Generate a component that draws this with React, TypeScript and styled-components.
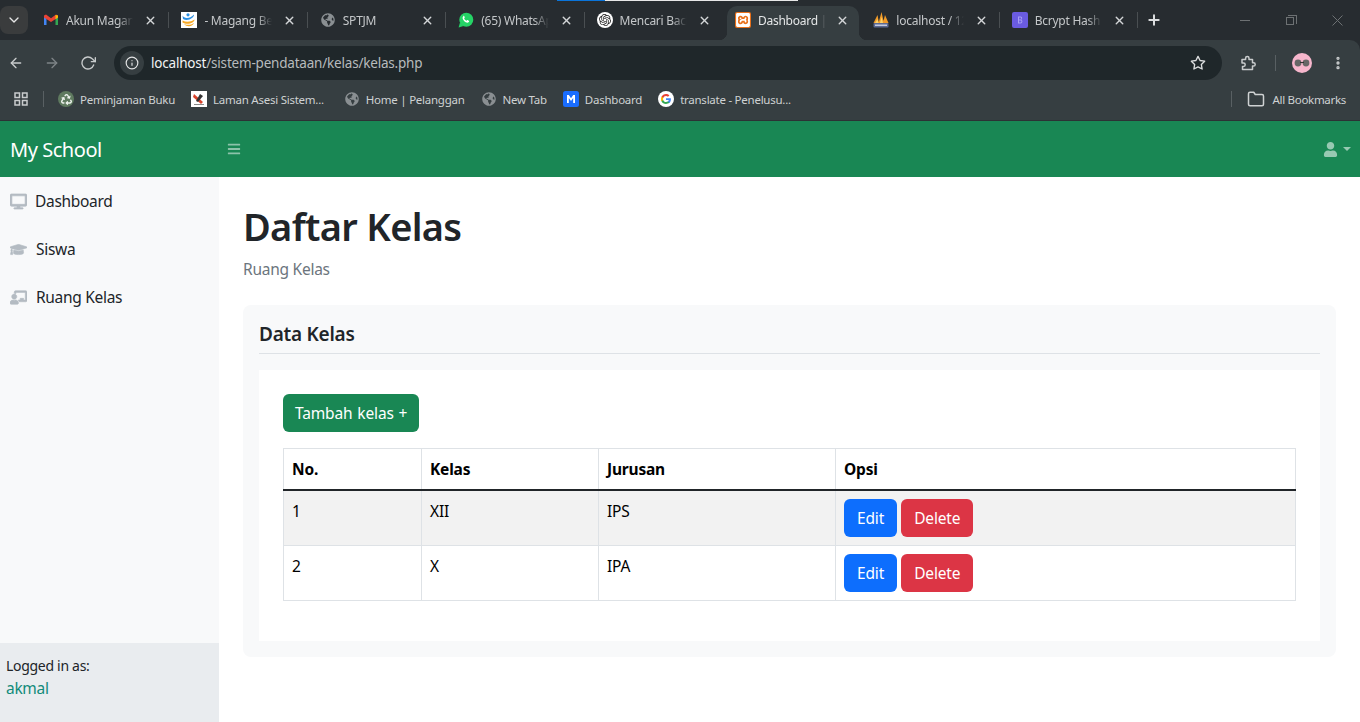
import React from "react";
import styled, { createGlobalStyle } from "styled-components";
import { FaBars, FaChalkboardTeacher, FaDesktop, FaGlobeAmericas, FaGraduationCap, FaRecycle, FaUser } from "react-icons/fa";
import { SiOpenai, SiXampp } from "react-icons/si";
import { FiArrowLeft, FiArrowRight, FiFolder, FiInfo, FiMoreVertical, FiPlus, FiRotateCw, FiStar, FiX } from "react-icons/fi";
import { LuChevronDown } from "react-icons/lu";

const Global = createGlobalStyle`
  html, body { margin: 0; padding: 0; height: 100%; overflow: hidden; background: #fff; }
  body { font-family: "Noto Sans", "Liberation Sans", sans-serif; color: #212529; }
  #root { height: 722px; }
  * { box-sizing: border-box; }
`;

const Shell = styled.div`
  display: flex;
  flex-direction: column;
  width: 1360px;
  height: 722px;
  background: #272c30;
`;

/* ---------- browser chrome ---------- */
const TabStrip = styled.div`
  position: relative;
  display: flex;
  align-items: flex-start;
  flex: 0 0 40px;
  background: #272c30;
  color: #c9ccce;
`;
const LoadBar = styled.div`
  position: absolute;
  top: 0;
  left: 557px;
  width: 241px;
  height: 1px;
  background: linear-gradient(90deg, #0a74da 0 48px, #e8e8e8 48px);
`;
const TabMenu = styled.div`
  display: flex;
  flex: 0 0 28px;
  align-items: center;
  justify-content: center;
  height: 28px;
  margin: 6px 3px 0 0;
  border-radius: 8px;
  background: #3a3c3d;
  color: #e6e6e6;
  font-size: 16px;
`;
const TabItem = styled.div`
  position: relative;
  display: flex;
  align-items: center;
  flex: 0 0 138.4px;
  min-width: 0;
  height: 40px;
  padding: 0 12px;
  font-size: 12px;
  letter-spacing: -0.25px;
  color: #c4c7c9;
`;
const ActiveTab = styled(TabItem)`
  flex-basis: 132.4px;
  height: 34px;
  margin: 6px 2px 0 4px;
  padding: 0 10px 6px 8px;
  border-radius: 10px 10px 0 0;
  background: #363e41;
  color: #e4e6e7;
  &::before,
  &::after {
    content: "";
    position: absolute;
    bottom: 0;
    width: 8px;
    height: 8px;
  }
  &::before {
    left: -8px;
    background: radial-gradient(circle at 0 0, transparent 8px, #363e41 8.5px);
  }
  &::after {
    right: -8px;
    background: radial-gradient(circle at 100% 0, transparent 8px, #363e41 8.5px);
  }
`;
const TabSep = styled.span`
  position: absolute;
  right: 0;
  top: 12px;
  width: 1px;
  height: 16px;
  background: #4a4f52;
`;
const IconSlot = styled.span`
  display: inline-flex;
  align-items: center;
  justify-content: center;
  flex: 0 0 16px;
  width: 16px;
  height: 16px;
`;
const Badge = styled.span<{ $bg: string; $round?: boolean }>`
  display: inline-flex;
  align-items: center;
  justify-content: center;
  width: 16px;
  height: 16px;
  border-radius: ${(p) => (p.$round ? "50%" : "2px")};
  background: ${(p) => p.$bg};
`;
const TabTitle = styled.span<{ $fadeFrom: number }>`
  flex: 1;
  min-width: 0;
  margin: 0 11px 0 7px;
  overflow: hidden;
  white-space: nowrap;
  -webkit-mask-image: linear-gradient(90deg, #000 ${(p) => p.$fadeFrom}%, transparent 100%);
  mask-image: linear-gradient(90deg, #000 ${(p) => p.$fadeFrom}%, transparent 100%);
`;
const CloseX = styled(FiX)`
  flex: 0 0 13px;
  width: 13px;
  height: 13px;
  stroke-width: 2.6;
  color: #d4d6d8;
`;
const NewTab = styled(FiPlus)`
  flex: 0 0 16px;
  width: 16px;
  height: 16px;
  margin: 12px 0 0 8px;
  stroke-width: 3;
  color: #dcdedf;
`;
const WindowControls = styled.div`
  display: flex;
  align-items: center;
  gap: 36px;
  height: 40px;
  margin-left: auto;
  padding-right: 17px;
`;
const WinMin = styled.span`
  width: 10px;
  height: 1px;
  background: #6d7173;
`;
const WinMax = styled.span`
  position: relative;
  width: 8px;
  height: 8px;
  margin: 2px 2px 0 0;
  border: 1px solid #6d7173;
  &::after {
    content: "";
    position: absolute;
    left: 1px;
    top: -3px;
    width: 8px;
    height: 8px;
    border-top: 1px solid #6d7173;
    border-right: 1px solid #6d7173;
  }
`;
const Toolbar = styled.div`
  display: flex;
  align-items: center;
  flex: 0 0 46px;
  padding: 0 0 0 8px;
  border-top-right-radius: 10px;
  background: #363e41;
  color: #c9cccd;
`;
const NavIcon = styled.span<{ $dim?: boolean }>`
  display: inline-flex;
  width: 16px;
  height: 16px;
  margin-right: 20px;
  font-size: 16px;
  color: ${(p) => (p.$dim ? "#7e8487" : "#c9cccd")};
`;
const Omnibox = styled.div`
  display: flex;
  align-items: center;
  width: 1108px;
  height: 34px;
  margin-left: -2px;
  padding: 0 16px 0 6px;
  border-radius: 17px;
  background: #1f272a;
  font-size: 13.5px;
  letter-spacing: -0.2px;
`;
const SiteInfo = styled.span`
  display: inline-flex;
  align-items: center;
  justify-content: center;
  width: 24px;
  height: 24px;
  margin-right: 7px;
  border-radius: 50%;
  background: #363e41;
  color: #e3e4e5;
  font-size: 14px;
`;
const UrlHost = styled.span`
  color: #f1f3f4;
`;
const UrlPath = styled.span`
  flex: 1;
  color: #b7bbbd;
`;
const ToolIcons = styled.div`
  display: flex;
  align-items: center;
  margin-left: 17px;
  color: #c9cccd;
`;
const ToolSep = styled.span`
  width: 1px;
  height: 16px;
  margin: 0 16px 0 18px;
  background: #596063;
`;
const Avatar = styled.span`
  display: inline-flex;
  align-items: center;
  justify-content: center;
  width: 20px;
  height: 20px;
  margin-right: 18px;
  border-radius: 50%;
  background: #f6b6cc;
`;
const Kebab = styled(FiMoreVertical)`
  width: 16px;
  height: 16px;
  stroke-width: 3;
`;
const BookmarkBar = styled.div`
  display: flex;
  align-items: center;
  flex: 0 0 35px;
  padding: 0 14px 8px 13px;
  background: #363e41;
  border-bottom: 1px solid #2c3235;
  font-size: 11.5px;
  letter-spacing: -0.25px;
  color: #cfd2d3;
`;
const BarSep = styled.span`
  width: 1px;
  height: 16px;
  margin: 0 14px;
  background: #596063;
`;
const EndSep = styled(BarSep)`
  margin: 0 15px 0 0;
`;
const Bookmark = styled.span<{ $after?: number }>`
  display: inline-flex;
  align-items: center;
  gap: 6px;
  margin-right: ${(p) => p.$after ?? 16}px;
  white-space: nowrap;
`;
const BookmarksEnd = styled.div`
  display: flex;
  align-items: center;
  margin-left: auto;
`;
const AllBookmarks = styled(Bookmark)`
  margin: 0;
  gap: 7px;
  letter-spacing: -0.3px;
`;

/* ---------- page ---------- */
const TopNav = styled.nav`
  display: flex;
  align-items: center;
  flex: 0 0 56px;
  background: #198754;
  color: #fff;
`;
const Brand = styled.div`
  width: 219px;
  padding-left: 10px;
  font-size: 20px;
  letter-spacing: -0.45px;
`;
const Burger = styled(FaBars)`
  width: 14px;
  height: 14px;
  margin-left: 8px;
  color: rgba(255, 255, 255, 0.5);
`;
const UserMenu = styled.div`
  display: flex;
  align-items: center;
  gap: 5px;
  margin-left: auto;
  padding-right: 9px;
  color: rgba(255, 255, 255, 0.55);
`;
const Caret = styled.span`
  border-top: 4px solid rgba(255, 255, 255, 0.55);
  border-left: 4px solid transparent;
  border-right: 4px solid transparent;
`;
const Body = styled.div`
  display: flex;
  flex: 1;
  min-height: 0;
  background: #fff;
`;
const Sidebar = styled.aside`
  display: flex;
  flex-direction: column;
  flex: 0 0 219px;
  background: #f8f9fa;
`;
const SideMenu = styled.div`
  flex: 1;
`;
const SideLink = styled.div`
  display: flex;
  align-items: center;
  height: 48px;
  padding-left: 10px;
  font-size: 15.5px;
  letter-spacing: -0.3px;
  color: #212529;
`;
const SideIcon = styled.span<{ $gap: number }>`
  display: inline-flex;
  width: 17px;
  margin-right: ${(p) => p.$gap}px;
  font-size: 17px;
  color: #b4bbc2;
  svg {
    stroke: currentColor;
    stroke-width: 22;
  }
`;
const SideFooter = styled.div`
  flex: 0 0 79px;
  padding: 13px 6px;
  background: #e9ecef;
  font-size: 14px;
  letter-spacing: -0.3px;
  line-height: 20px;
`;
const UserName = styled.div`
  margin-top: 2px;
  font-size: 15.5px;
  color: #128a7a;
`;
const Main = styled.main`
  flex: 1;
  min-width: 0;
  padding: 23px 24px 0;
`;
const Title = styled.h1`
  margin: 0;
  font-size: 38px;
  line-height: 52px;
  font-weight: 600;
  letter-spacing: -0.7px;
`;
const Subtitle = styled.p`
  margin: 7px 0 26px;
  font-size: 15.5px;
  line-height: 20px;
  letter-spacing: -0.25px;
  color: #6c757d;
`;
const Card = styled.section`
  padding: 16px;
  border-radius: 8px;
  background: #f8f9fa;
`;
const CardHead = styled.h2`
  margin: 0 0 16px;
  padding-bottom: 6px;
  border-bottom: 1px solid #dee2e6;
  font-size: 19px;
  line-height: 26px;
  font-weight: 600;
  letter-spacing: -0.25px;
`;
const Panel = styled.div`
  padding: 24px 24px 40px;
  background: #fff;
`;
const Button = styled.button<{ $bg: string }>`
  height: 38px;
  padding: 0 13px;
  border: 0;
  border-radius: 6px;
  background: ${(p) => p.$bg};
  color: #fff;
  font: inherit;
  font-size: 15.5px;
  letter-spacing: -0.15px;
  white-space: nowrap;
`;
const AddButton = styled(Button)`
  display: block;
  width: 136px;
  margin-bottom: 16px;
  padding: 0 12px;
  word-spacing: 1px;
`;
const Table = styled.table`
  width: 1013px;
  table-layout: fixed;
  border-collapse: collapse;
  font-size: 15.5px;
  letter-spacing: -0.2px;
  color: #000;
`;
const HeadCell = styled.th<{ $w?: number }>`
  width: ${(p) => (p.$w ? `${p.$w}px` : "auto")};
  height: 41px;
  padding: 0 8px;
  border: 1px solid #dee2e6;
  border-bottom: 2px solid #212529;
  text-align: left;
  font-weight: 700;
`;
const Row = styled.tr<{ $striped?: boolean }>`
  background: ${(p) => (p.$striped ? "#f2f2f2" : "#fff")};
`;
const Cell = styled.td`
  height: 55px;
  padding: 8px;
  border: 1px solid #dee2e6;
  vertical-align: top;
  line-height: 24px;
`;
const CellActions = styled.div`
  display: flex;
  gap: 4px;
`;

const Favicon = ({ kind }: { kind: string }) => {
  switch (kind) {
    case "gmail":
      return (
        <svg width="16" height="16" viewBox="0 0 16 16">
          <path d="M1 4v9h2.500V6.500z" fill="#4285f4" />
          <path d="M15 4v9h-2.500V6.500z" fill="#34a853" />
          <path d="M1 3.600 3 2.400 8 6.300l5-3.900 2 1.200v1.900L8 10 1 5.500z" fill="#ea4335" />
          <path d="M12.500 3 15 3.600v2l-2.500 1.700z" fill="#fbbc04" />
        </svg>
      );
    case "magang":
      return (
        <svg width="16" height="16" viewBox="0 0 16 16">
          <rect width="16" height="16" fill="#fff" />
          <circle cx="7" cy="2.800" r="1.600" fill="#2d8fe0" />
          <path d="M1.500 3.500C3 7 9 7 13 2.500c.5 3-6 7.500-11 4.500z" fill="#2d8fe0" />
          <path d="M1.500 8.500c4 2 8 1.500 12-1 .5 3-7 6-12 3z" fill="#f7a823" />
          <path d="M3 12c3.500 1.500 7 1 10-1-1 3.500-7 4.500-10 1z" fill="#f7a823" />
        </svg>
      );
    case "globe":
      return <FaGlobeAmericas size={14} color="#8a8f92" />;
    case "whatsapp":
      return (
        <svg width="16" height="16" viewBox="0 0 16 16">
          <circle cx="8.300" cy="7.700" r="7" fill="#25d366" />
          <path d="M.6 15.600 2 10.500l3.500 3.500z" fill="#25d366" />
          <path d="M5.300 4.300c-1.200 1-.9 2.900.8 4.700 1.800 1.800 3.600 2.200 4.700 1 .5-.5.4-1-.1-1.300l-1.100-.6c-.3-.1-.6 0-.8.3-.3.400-.6.400-1.200-.1-.7-.6-1.200-1.100-1.400-1.600-.1-.3 0-.5.3-.7.3-.3.3-.6.2-.9l-.6-1c-.2-.4-.5-.3-.8.200z" fill="#fff" />
        </svg>
      );
    case "openai":
      return (
        <Badge $bg="#fff" $round>
          <SiOpenai size={12} color="#222" />
        </Badge>
      );
    case "xampp":
      return (
        <Badge $bg="#e8701a">
          <SiXampp size={14} color="#fff" />
        </Badge>
      );
    case "pma":
      return (
        <svg width="16" height="16" viewBox="0 0 16 16">
          <path d="M.5 11 4.500 3 6 11zM5.500 11 8.500 0 11 11zM10 11l2-8 3.500 8z" fill="#f29b28" />
          <path d="M7 11 8.500 5 10 11zM2 11l2.500-4L5.500 11z" fill="#fbd36a" />
          <rect x="0.500" y="11" width="15" height="4.500" rx="1" fill="#5d6a92" />
          <path d="M2 12.500h12v1.500H2z" fill="#c4cae0" />
        </svg>
      );
    case "bcrypt":
      return (
        <svg width="16" height="16" viewBox="0 0 16 16">
          <rect width="16" height="16" rx="2" fill="#6a5be0" />
          <path d="M6 4.500h2.600c2 0 2 3 .4 3.300 2 .3 1.800 3.700-.4 3.700H6zM7 5.400v2h1.500c1 0 1-2 0-2zM7 8.400v2.200h1.500c1.200 0 1.200-2.200 0-2.200z" fill="#a79ff2" />
        </svg>
      );
    case "recycle":
      return (
        <Badge $bg="#5f7a5f" $round>
          <FaRecycle size={11} color="#eef3ee" />
        </Badge>
      );
    case "asesi":
      return (
        <svg width="16" height="16" viewBox="0 0 16 16">
          <rect width="16" height="16" fill="#fff" />
          <path d="M3 3l9 8-2 2-8-7z" fill="#d8442c" />
          <path d="M9 3l3 2-5 6-2-1z" fill="#333" />
          <rect x="3" y="13" width="10" height="1" fill="#888" />
        </svg>
      );
    case "mblue":
      return (
        <svg width="16" height="16" viewBox="0 0 16 16">
          <rect width="16" height="16" rx="2.500" fill="#1a6dff" />
          <path d="M4 12V4h1.800L8 7.200 10.200 4H12v8h-1.800V7L8 10 5.800 7v5z" fill="#fff" />
        </svg>
      );
    case "google":
      return (
        <svg width="16" height="16" viewBox="0 0 16 16">
          <circle cx="8" cy="8" r="8" fill="#fff" />
          <path d="M12.900 8.200c0-.4 0-.7-.1-1H8v1.900h2.800c-.1.600-.5 1.200-1 1.500v1.300h1.600c1-.9 1.500-2.200 1.500-3.700z" fill="#4285f4" />
          <path d="M8 13c1.400 0 2.500-.5 3.400-1.200l-1.600-1.300c-.5.300-1 .5-1.800.5-1.300 0-2.400-.9-2.800-2.100H3.500v1.300C4.300 11.900 6 13 8 13z" fill="#34a853" />
          <path d="M5.200 8.900C5 8.300 5 7.700 5.200 7.100V5.800H3.500c-.7 1.400-.7 3 0 4.400z" fill="#fbbc04" />
          <path d="M8 5c.7 0 1.400.3 1.900.8l1.500-1.400C10.500 3.500 9.300 3 8 3 6 3 4.300 4.100 3.500 5.800l1.700 1.300C5.600 5.900 6.700 5 8 5z" fill="#ea4335" />
        </svg>
      );
    default:
      return null;
  }
};

const tabs = [
  { icon: "gmail", title: "Akun Magang" },
  { icon: "magang", title: "- Magang Bersama" },
  { icon: "globe", title: "SPTJM" },
  { icon: "whatsapp", title: "(65) WhatsApp" },
  { icon: "openai", title: "Mencari Backup" },
  { icon: "xampp", title: "Dashboard | My School", active: true },
  { icon: "pma", title: "localhost / 127.0.0.1" },
  { icon: "bcrypt", title: "Bcrypt Hash Generator" },
];

const bookmarks = [
  { icon: "recycle", label: "Peminjaman Buku" },
  { icon: "asesi", label: "Laman Asesi Sistem...", after: 20 },
  { icon: "globe", label: "Home | Pelanggan" },
  { icon: "globe", label: "New Tab" },
  { icon: "mblue", label: "Dashboard" },
  { icon: "google", label: "translate - Penelusu..." },
];

const GridIcon = () => (
  <svg width="16" height="16" viewBox="0 0 16 16" fill="none" stroke="#c9cccd" strokeWidth="1.500">
    <rect x="2" y="2" width="4.500" height="4.500" />
    <rect x="9.500" y="2" width="4.500" height="4.500" />
    <rect x="2" y="9.500" width="4.500" height="4.500" />
    <rect x="9.500" y="9.500" width="4.500" height="4.500" />
  </svg>
);

const ExtensionIcon = () => (
  <svg width="18" height="18" viewBox="0 0 18 18" fill="none" stroke="#c9cccd" strokeWidth="1.500" strokeLinejoin="round">
    <path d="M3 5.500h3.600V4.200a1.700 1.700 0 0 1 3.400 0v1.300h3.500v3.200h1a1.700 1.700 0 0 1 0 3.400h-1V15.500H3.500v-3h1a1.700 1.700 0 0 0 0-3.400h-1.500z" />
  </svg>
);

const WinClose = () => (
  <svg width="11" height="11" viewBox="0 0 11 11" stroke="#6d7173" strokeWidth="1">
    <path d="M.5.500l10 10M10.500.500l-10 10" />
  </svg>
);

const Glasses = () => (
  <svg width="16" height="8" viewBox="0 0 16 8">
    <circle cx="4" cy="4" r="3.400" fill="#666" />
    <circle cx="12" cy="4" r="3.400" fill="#666" />
    <rect x="6" y="3" width="4" height="1" fill="#333" />
  </svg>
);

export default function App() {
  return (
    <Shell>
      <Global />
      <TabStrip>
        <LoadBar />
        <TabMenu>
          <LuChevronDown />
        </TabMenu>
        {tabs.map((t, i) => {
          const Tab = t.active ? ActiveTab : TabItem;
          return (
            <Tab key={t.title}>
              <IconSlot>
                <Favicon kind={t.icon} />
              </IconSlot>
              <TabTitle $fadeFrom={t.active ? 92 : 78}>{t.title}</TabTitle>
              <CloseX />
              {!t.active && i !== 4 && <TabSep />}
            </Tab>
          );
        })}
        <NewTab />
        <WindowControls>
          <WinMin />
          <WinMax />
          <WinClose />
        </WindowControls>
      </TabStrip>
      <Toolbar>
        <NavIcon>
          <FiArrowLeft />
        </NavIcon>
        <NavIcon $dim>
          <FiArrowRight />
        </NavIcon>
        <NavIcon>
          <FiRotateCw />
        </NavIcon>
        <Omnibox>
          <SiteInfo>
            <FiInfo />
          </SiteInfo>
          <UrlHost>localhost</UrlHost>
          <UrlPath>/sistem-pendataan/kelas/kelas.php</UrlPath>
          <FiStar size={16} color="#dcdedf" />
        </Omnibox>
        <ToolIcons>
          <ExtensionIcon />
          <ToolSep />
          <Avatar>
            <Glasses />
          </Avatar>
          <Kebab />
        </ToolIcons>
      </Toolbar>
      <BookmarkBar>
        <GridIcon />
        <BarSep />
        {bookmarks.map((b) => (
          <Bookmark key={b.label} $after={b.after}>
            <IconSlot>
              <Favicon kind={b.icon} />
            </IconSlot>
            {b.label}
          </Bookmark>
        ))}
        <BookmarksEnd>
          <EndSep />
          <AllBookmarks>
            <FiFolder size={18} />
            All Bookmarks
          </AllBookmarks>
        </BookmarksEnd>
      </BookmarkBar>
      <TopNav>
        <Brand>My School</Brand>
        <Burger />
        <UserMenu>
          <FaUser size={15} />
          <Caret />
        </UserMenu>
      </TopNav>
      <Body>
        <Sidebar>
          <SideMenu>
            <SideLink>
              <SideIcon $gap={8}>
                <FaDesktop />
              </SideIcon>
              Dashboard
            </SideLink>
            <SideLink>
              <SideIcon $gap={9}>
                <FaGraduationCap />
              </SideIcon>
              Siswa
            </SideLink>
            <SideLink>
              <SideIcon $gap={9}>
                <FaChalkboardTeacher />
              </SideIcon>
              Ruang Kelas
            </SideLink>
          </SideMenu>
          <SideFooter>
            Logged in as:
            <UserName>akmal</UserName>
          </SideFooter>
        </Sidebar>
        <Main>
          <Title>Daftar Kelas</Title>
          <Subtitle>Ruang Kelas</Subtitle>
          <Card>
            <CardHead>Data Kelas</CardHead>
            <Panel>
              <AddButton $bg="#198754">Tambah kelas +</AddButton>
              <Table>
                <thead>
                  <tr>
                    <HeadCell $w={138}>No.</HeadCell>
                    <HeadCell $w={177}>Kelas</HeadCell>
                    <HeadCell $w={237}>Jurusan</HeadCell>
                    <HeadCell>Opsi</HeadCell>
                  </tr>
                </thead>
                <tbody>
                  {[
                    ["1", "XII", "IPS"],
                    ["2", "X", "IPA"],
                  ].map((r, i) => (
                    <Row key={r[0]} $striped={i === 0}>
                      <Cell>{r[0]}</Cell>
                      <Cell>{r[1]}</Cell>
                      <Cell>{r[2]}</Cell>
                      <Cell>
                        <CellActions>
                          <Button $bg="#0d6efd">Edit</Button>
                          <Button $bg="#dc3545">Delete</Button>
                        </CellActions>
                      </Cell>
                    </Row>
                  ))}
                </tbody>
              </Table>
            </Panel>
          </Card>
        </Main>
      </Body>
    </Shell>
  );
}
